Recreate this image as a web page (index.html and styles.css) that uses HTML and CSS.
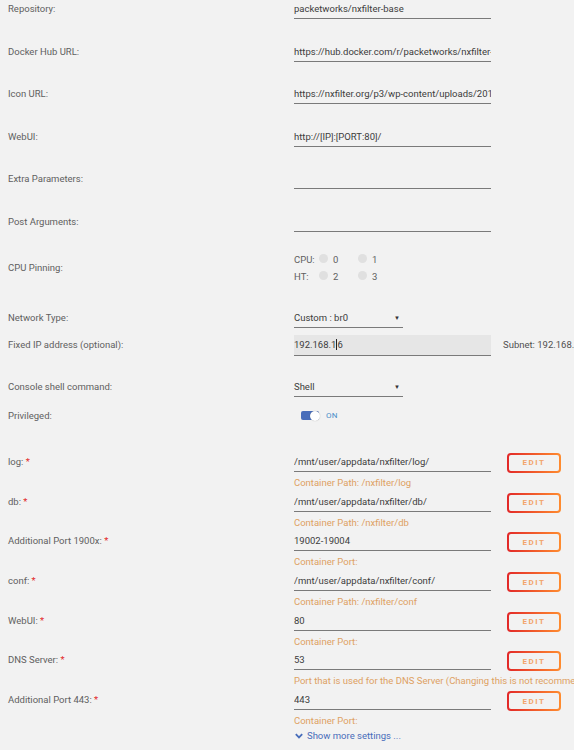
FILE: index.html
```html
<!DOCTYPE html>
<html>
<head>
<meta charset="utf-8">
<link rel="stylesheet" href="styles.css">
</head>
<body>
<div class="form">
  <div class="row r-text">
    <div class="label">Repository:</div>
    <div class="field">packetworks/nxfilter-base</div>
  </div>
  <div class="row r-text">
    <div class="label">Docker Hub URL:</div>
    <div class="field">https://hub.docker.com/r/packetworks/nxfilter-base/</div>
  </div>
  <div class="row r-text">
    <div class="label">Icon URL:</div>
    <div class="field">https://nxfilter.org/p3/wp-content/uploads/2018/01/nxfilter.png</div>
  </div>
  <div class="row r-text">
    <div class="label">WebUI:</div>
    <div class="field">http://[IP]:[PORT:80]/</div>
  </div>
  <div class="row r-text">
    <div class="label">Extra Parameters:</div>
    <div class="field"></div>
  </div>
  <div class="row r-post">
    <div class="label">Post Arguments:</div>
    <div class="field"></div>
  </div>
  <div class="row r-cpu">
    <div class="label">CPU Pinning:</div>
    <div class="cpus">
      <div class="cpu-line">
        <span class="cpu-tag">CPU:</span>
        <span class="radio"></span><span class="num">0</span>
        <span class="radio"></span><span class="num">1</span>
      </div>
      <div class="cpu-line">
        <span class="cpu-tag">HT:</span>
        <span class="radio"></span><span class="num">2</span>
        <span class="radio"></span><span class="num">3</span>
      </div>
    </div>
  </div>
  <div class="row r-net">
    <div class="label">Network Type:</div>
    <div class="select">Custom : br0<span class="arrow">▼</span></div>
  </div>
  <div class="row r-ip">
    <div class="label pad4">Fixed IP address (optional):</div>
    <div class="field ipfield">192.168.1<span class="caret"></span>6</div>
    <div class="subnet">Subnet: 192.168.1.0/24</div>
  </div>
  <div class="row r-console">
    <div class="label">Console shell command:</div>
    <div class="select">Shell<span class="arrow">▼</span></div>
  </div>
  <div class="row r-priv">
    <div class="label">Privileged:</div>
    <div class="toggle-wrap"><span class="toggle"><span class="knob"></span></span><span class="on">ON</span></div>
  </div>

  <div class="row r-port">
    <div class="label">log: <span class="req">*</span></div>
    <div class="pcol"><div class="field">/mnt/user/appdata/nxfilter/log/</div><div class="hint">Container Path: /nxfilter/log</div></div>
    <button class="edit">EDIT</button>
  </div>
  <div class="row r-port">
    <div class="label">db: <span class="req">*</span></div>
    <div class="pcol"><div class="field">/mnt/user/appdata/nxfilter/db/</div><div class="hint">Container Path: /nxfilter/db</div></div>
    <button class="edit">EDIT</button>
  </div>
  <div class="row r-port">
    <div class="label">Additional Port 1900x: <span class="req">*</span></div>
    <div class="pcol"><div class="field">19002-19004</div><div class="hint">Container Port:</div></div>
    <button class="edit">EDIT</button>
  </div>
  <div class="row r-port">
    <div class="label">conf: <span class="req">*</span></div>
    <div class="pcol"><div class="field">/mnt/user/appdata/nxfilter/conf/</div><div class="hint">Container Path: /nxfilter/conf</div></div>
    <button class="edit">EDIT</button>
  </div>
  <div class="row r-port">
    <div class="label">WebUI: <span class="req">*</span></div>
    <div class="pcol"><div class="field">80</div><div class="hint">Container Port:</div></div>
    <button class="edit">EDIT</button>
  </div>
  <div class="row r-port">
    <div class="label">DNS Server: <span class="req">*</span></div>
    <div class="pcol"><div class="field">53</div><div class="hint wide">Port that is used for the DNS Server (Changing this is not recommended)</div></div>
    <button class="edit">EDIT</button>
  </div>
  <div class="row r-port">
    <div class="label">Additional Port 443: <span class="req">*</span></div>
    <div class="pcol"><div class="field">443</div><div class="hint">Container Port:</div></div>
    <button class="edit">EDIT</button>
  </div>
  <div class="more">
    <svg class="chev" width="8" height="6" viewBox="0 0 8 6"><path d="M0.8 1.2 L4 4.4 L7.2 1.2" fill="none" stroke="#486dba" stroke-width="1.8"/></svg>
    <span>Show more settings ...</span>
  </div>
</div>
</body>
</html>
```
FILE: styles.css
```css
html, body {
  margin: 0;
  padding: 0;
  background: #f2f2f2;
  overflow: hidden;
  width: 574px;
  height: 750px;
}
body {
  font-family: Roboto, "Open Sans", Arial, sans-serif;
  font-size: 9.5px;
  color: #606060;
}
.form {
  padding-left: 8px;
}
.row {
  display: grid;
  grid-template-columns: 286px 197px 16px 54px;
  align-items: start;
}
.label {
  line-height: 12px;
  padding-top: 3px;
  white-space: nowrap;
}
.label.pad4 {
  padding-top: 4px;
}
.req {
  color: #e22828;
}
.field {
  line-height: 12px;
  padding: 3px 0 3px;
  height: 12px;
  border-bottom: 1px solid #7a7a7a;
  color: #3c3c3c;
  white-space: nowrap;
  overflow: hidden;
}
.r-text { height: 42.6px; }
.r-post { height: 39px; }
.r-cpu { height: 57px; }
.r-cpu .label { padding-top: 10px; }
.r-net { height: 26px; }
.r-ip { height: 43px; }
.r-console { height: 29px; }
.r-priv { height: 46px; }
.r-port { height: 39.7px; }

.cpus {
  display: flex;
  flex-direction: column;
  grid-column: 2 / 4;
}
.cpu-line {
  display: flex;
  align-items: center;
  height: 17px;
  line-height: 12px;
}
.cpu-tag {
  width: 25px;
}
.radio {
  width: 9px;
  height: 9px;
  border-radius: 50%;
  background: #e0e0e0;
  margin-top: -4px;
  margin-right: 5px;
}
.num {
  width: 25px;
  color: #606060;
}
.select {
  width: 109px;
  line-height: 12px;
  padding: 3px 0 3px;
  height: 12px;
  border-bottom: 1px solid #7a7a7a;
  color: #3c3c3c;
  display: flex;
  justify-content: space-between;
}
.arrow {
  font-size: 6px;
  color: #333;
  padding-right: 3px;
}
.ipfield {
  background: #e6e6e6;
  padding: 4px 0 4px;
}
.caret {
  display: inline-block;
  width: 1px;
  height: 11px;
  background: #222;
  vertical-align: -2px;
}
.subnet {
  grid-column: 3 / 5;
  padding-left: 12px;
  padding-top: 4px;
  line-height: 12px;
  white-space: nowrap;
  color: #505050;
}
.toggle-wrap {
  display: flex;
  align-items: center;
  height: 18px;
  padding-left: 7px;
}
.toggle {
  position: relative;
  width: 18px;
  height: 9px;
  border-radius: 2px;
  background: #486dba;
}
.knob {
  position: absolute;
  right: -1px;
  top: -0.5px;
  width: 10px;
  height: 10px;
  border-radius: 50%;
  background: #fff;
  box-shadow: 0 0 1px rgba(0,0,0,0.35);
}
.on {
  margin-left: 7px;
  font-size: 8px;
  letter-spacing: 0.3px;
  color: #4a8ec9;
}
.pcol {
  display: flex;
  flex-direction: column;
}
.hint {
  margin-top: 5px;
  line-height: 12px;
  color: #dea162;
  white-space: nowrap;
}
.edit {
  grid-column: 4;
  width: 54px;
  height: 20px;
  padding: 0;
  margin: 0;
  border: 2px solid transparent;
  border-radius: 4px;
  background: linear-gradient(#f2f2f2, #f2f2f2) padding-box,
              linear-gradient(90deg, #e22828, #ff8c2f) border-box;
  font-family: Roboto, Arial, sans-serif;
  font-size: 8px;
  font-weight: bold;
  letter-spacing: 1.5px;
  color: #f2a46a;
  text-align: center;
}
.more {
  display: flex;
  align-items: center;
  margin-left: 286px;
  margin-top: -1px;
  line-height: 12px;
  color: #486dba;
}
.chev {
  margin-left: 1px;
  margin-right: 4px;
}
```
